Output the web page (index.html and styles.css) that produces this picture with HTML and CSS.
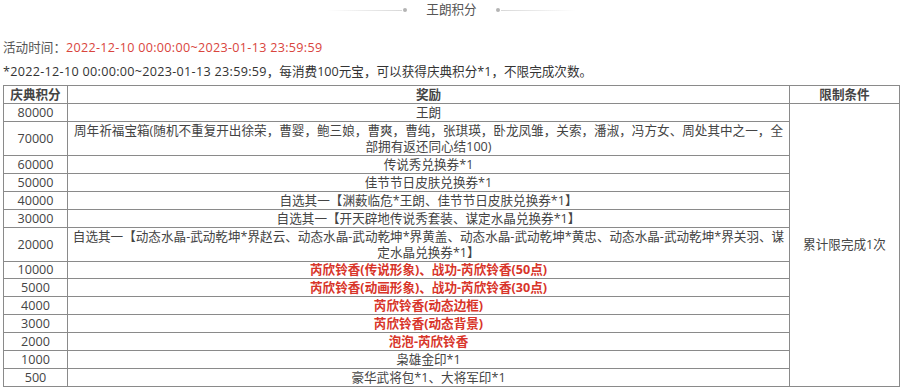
FILE: index.html
```html
<!DOCTYPE html>
<html lang="zh-CN">
<head>
<meta charset="utf-8">
<title>王朗积分</title>
<link rel="stylesheet" href="styles.css">
</head>
<body>
<div class="page">
  <div class="title">
    <span class="rule rule-left"></span>
    <span class="dot"></span>
    <span class="title-text">王朗积分</span>
    <span class="dot"></span>
    <span class="rule rule-right"></span>
  </div>
  <p class="time">活动时间：<span class="red date">2022-12-10 00:00:00~2023-01-13 23:59:59</span></p>
  <p class="desc"><span class="date">*2022-12-10 00:00:00~2023-01-13 23:59:59</span>，每消费100元宝，可以获得庆典积分*1，不限完成次数。</p>
  <table class="rewards">
    <colgroup>
      <col class="c1">
      <col class="c2">
      <col class="c3">
    </colgroup>
    <thead>
      <tr><th>庆典积分</th><th>奖励</th><th>限制条件</th></tr>
    </thead>
    <tbody>
      <tr><td>80000</td><td>王朗</td><td rowspan="14">累计限完成1次</td></tr>
      <tr><td>70000</td><td>周年祈福宝箱(随机不重复开出徐荣，曹婴，鲍三娘，曹爽，曹纯，张琪瑛，卧龙凤雏，关索，潘淑，冯方女、周处其中之一，全部拥有返还同心结100)</td></tr>
      <tr><td>60000</td><td>传说秀兑换券*1</td></tr>
      <tr><td>50000</td><td>佳节节日皮肤兑换券*1</td></tr>
      <tr><td>40000</td><td>自选其一【渊薮临危*王朗、佳节节日皮肤兑换券*1】</td></tr>
      <tr><td>30000</td><td>自选其一【开天辟地传说秀套装、谋定水晶兑换券*1】</td></tr>
      <tr><td>20000</td><td>自选其一【动态水晶-武动乾坤*界赵云、动态水晶-武动乾坤*界黄盖、动态水晶-武动乾坤*黄忠、动态水晶-武动乾坤*界关羽、谋定水晶兑换券*1】</td></tr>
      <tr><td>10000</td><td class="hot">芮欣铃香(传说形象)、战功-芮欣铃香(50点)</td></tr>
      <tr><td>5000</td><td class="hot">芮欣铃香(动画形象)、战功-芮欣铃香(30点)</td></tr>
      <tr><td>4000</td><td class="hot">芮欣铃香(动态边框)</td></tr>
      <tr><td>3000</td><td class="hot">芮欣铃香(动态背景)</td></tr>
      <tr><td>2000</td><td class="hot">泡泡-芮欣铃香</td></tr>
      <tr><td>1000</td><td>枭雄金印*1</td></tr>
      <tr><td>500</td><td>豪华武将包*1、大将军印*1</td></tr>
    </tbody>
  </table>
</div>
</body>
</html>
```

FILE: styles.css
```css
html, body {
  margin: 0;
  padding: 0;
  background: #ffffff;
}

body {
  font-family: "Open Sans", "Noto Sans CJK SC", sans-serif;
  font-size: 12.6px;
  color: #444444;
}

.page {
  padding: 0 5px 0 3px;
}

.title {
  display: flex;
  align-items: center;
  justify-content: center;
  height: 20px;
}

.rule {
  width: 75px;
  height: 1px;
}

.rule-left {
  background: linear-gradient(to right, rgba(220, 220, 220, 0), #d8d8d8);
  margin-right: 1px;
}

.rule-right {
  background: linear-gradient(to left, rgba(220, 220, 220, 0), #d8d8d8);
  margin-left: 1px;
}

.dot {
  width: 4px;
  height: 4px;
  border-radius: 50%;
  background: #b4b4b4;
}

.title-text {
  margin: 0 19px;
  color: #555555;
  line-height: 20px;
}

.time {
  margin: 16px 0 0;
  line-height: 24px;
  color: #555555;
}

.date {
  letter-spacing: 0.3px;
}

.red {
  color: #d9453d;
}

.desc {
  margin: 0 0 1px;
  line-height: 24px;
  color: #333333;
}

.rewards {
  width: 897px;
  border-collapse: collapse;
  table-layout: fixed;
}

.c1 {
  width: 64px;
}

.c3 {
  width: 110px;
}

.rewards th,
.rewards td {
  border: 1px solid #8a8a8a;
  padding: 0.95px 3px 0;
  line-height: 16px;
  text-align: center;
  vertical-align: middle;
  font-weight: normal;
}

.rewards th {
  font-weight: bold;
  color: #444444;
}

.rewards td.hot {
  color: #d8352a;
  font-weight: bold;
}
```
